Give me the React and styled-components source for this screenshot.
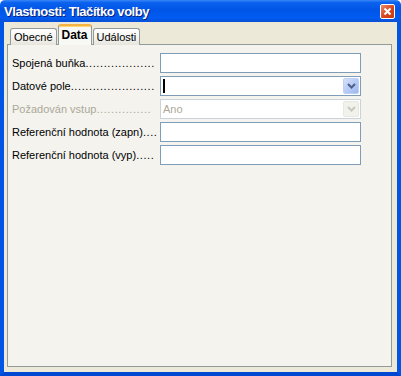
import React from 'react';
import styled, { createGlobalStyle, css } from 'styled-components';

const GlobalStyle = createGlobalStyle`
  html, body { margin: 0; padding: 0; background: #ffffff; }
  body { font-family: "Liberation Sans", Arial, sans-serif; }
`;

const Window = styled.div`
  width: 401px;
  height: 376px;
  display: flex;
  flex-direction: column;
  box-sizing: border-box;
  overflow: hidden;
`;

const TitleBar = styled.div`
  height: 22px;
  flex: none;
  display: flex;
  align-items: center;
  justify-content: space-between;
  padding: 0 6px 0 4px;
  background: linear-gradient(to bottom, #3a86f7 0%, #0a62ee 12%, #0055e6 45%, #005cf2 80%, #0a50d4 100%);
  border-radius: 5px 5px 0 0;
`;

const Title = styled.span`
  color: #ffffff;
  font-family: "Liberation Sans", Arial, sans-serif;
  font-weight: bold;
  font-size: 13px;
  letter-spacing: -0.45px;
  text-shadow: 1px 1px 0 #0a1e7a;
`;

const CloseButton = styled.div`
  width: 13px;
  height: 13px;
  display: flex;
  align-items: center;
  justify-content: center;
  border: 1px solid #ffffff;
  border-radius: 2px;
  background: linear-gradient(to bottom right, #e88b6f, #d8451d 55%, #c43a12);
`;

const Frame = styled.div`
  flex: 1;
  display: flex;
  border-left: 4px solid #0055e5;
  border-right: 4px solid #0055e5;
  border-bottom: 4px solid #0047d1;
  box-shadow: inset 1px 0 0 #0831d9;
`;

const Client = styled.div`
  flex: 1;
  display: flex;
  flex-direction: column;
  background: #ece9d8;
  padding: 2px 5px 5px 3px;
`;

const TabRow = styled.div`
  display: flex;
  align-items: flex-end;
  padding-left: 3px;
  height: 20px;
  position: relative;
  z-index: 1;
`;

const Tab = styled.div`
  box-sizing: border-box;
  height: 17px;
  padding: 0 3px 0 3px;
  margin-bottom: -1px;
  display: flex;
  align-items: center;
  font-size: 11px;
  color: #000000;
  border: 1px solid #919b9c;
  border-bottom: none;
  border-radius: 3px 3px 0 0;
  background: linear-gradient(to bottom, #ffffff, #f3f2ee 60%, #e6e4dc);
  ${(p) =>
    p.$active &&
    css`
      height: 21px;
      margin: 0 1px -1px 1px;
      padding: 1px 3px 2px 3px;
      font-weight: bold;
      font-size: 12px;
      background: #f8f8f4;
      border-top: 2px solid #f5b343;
      box-shadow: inset 0 1px 0 #ffd778;
    `}
`;

const Panel = styled.div`
  flex: 1;
  border: 1px solid #919b9c;
  background: #f4f3ee;
  padding: 8px 4px;
  display: flex;
  flex-direction: column;
  gap: 3px;
`;

const Row = styled.div`
  display: flex;
  align-items: center;
  height: 20px;
`;

const Label = styled.div`
  width: 148px;
  flex: none;
  white-space: nowrap;
  font-size: 11px;
  color: ${(p) => (p.$disabled ? '#aca899' : '#000000')};
`;

const Leader = styled.span`
  letter-spacing: 0.6px;
`;

const Field = styled.div`
  box-sizing: border-box;
  width: 201px;
  height: 20px;
  border: 1px solid ${(p) => (p.$disabled ? '#c9d3dc' : '#7f9db9')};
  background: #ffffff;
  display: flex;
  align-items: center;
  padding: 0 1px 0 2px;
  font-size: 11px;
  color: #aca899;
`;

const Value = styled.span`
  flex: 1;
  display: flex;
  align-items: center;
`;

const Caret = styled.span`
  display: inline-block;
  width: 2px;
  height: 14px;
  background: #000000;
`;

const DropButton = styled.div`
  width: 16px;
  height: 16px;
  flex: none;
  display: flex;
  align-items: center;
  justify-content: center;
  border-radius: 2px;
  box-sizing: border-box;
  ${(p) =>
    p.$disabled
      ? css`
          background: #f2f2ec;
          border: 1px solid #e8e8e0;
        `
      : css`
          background: linear-gradient(to bottom right, #d6e2fb, #b4c9f5 55%, #9db8f1);
          border: 1px solid #bcd0f8;
        `}
`;

const Chevron = ({ color }) => (
  <svg width="9" height="6" viewBox="0 0 9 6">
    <path d="M1 1 L4.5 4.5 L8 1" fill="none" stroke={color} strokeWidth="2" />
  </svg>
);

const rows = [
  { label: 'Spojená buňka', dots: 19 },
  { label: 'Datové pole', dots: 23, combo: true, caret: true },
  { label: 'Požadován vstup', dots: 15, combo: true, value: 'Ano', disabled: true },
  { label: 'Referenční hodnota (zapn)', dots: 4 },
  { label: 'Referenční hodnota (vyp)', dots: 5 },
];

export default function App() {
  return (
    <>
      <GlobalStyle />
      <Window>
        <TitleBar>
          <Title>Vlastnosti: Tlačítko volby</Title>
          <CloseButton>
            <svg width="9" height="9" viewBox="0 0 9 9">
              <path d="M1.5 1.5 L7.5 7.5 M7.5 1.5 L1.5 7.5" stroke="#ffffff" strokeWidth="2" />
            </svg>
          </CloseButton>
        </TitleBar>
        <Frame>
          <Client>
            <TabRow>
              <Tab>Obecné</Tab>
              <Tab $active>Data</Tab>
              <Tab>Události</Tab>
            </TabRow>
            <Panel>
              {rows.map((r) => (
                <Row key={r.label}>
                  <Label $disabled={r.disabled}>
                    {r.label}
                    <Leader>{'.'.repeat(r.dots)}</Leader>
                  </Label>
                  <Field $disabled={r.disabled}>
                    <Value>{r.caret ? <Caret /> : r.value}</Value>
                    {r.combo && (
                      <DropButton $disabled={r.disabled}>
                        <Chevron color={r.disabled ? '#c8c8bf' : '#4d6185'} />
                      </DropButton>
                    )}
                  </Field>
                </Row>
              ))}
            </Panel>
          </Client>
        </Frame>
      </Window>
    </>
  );
}
